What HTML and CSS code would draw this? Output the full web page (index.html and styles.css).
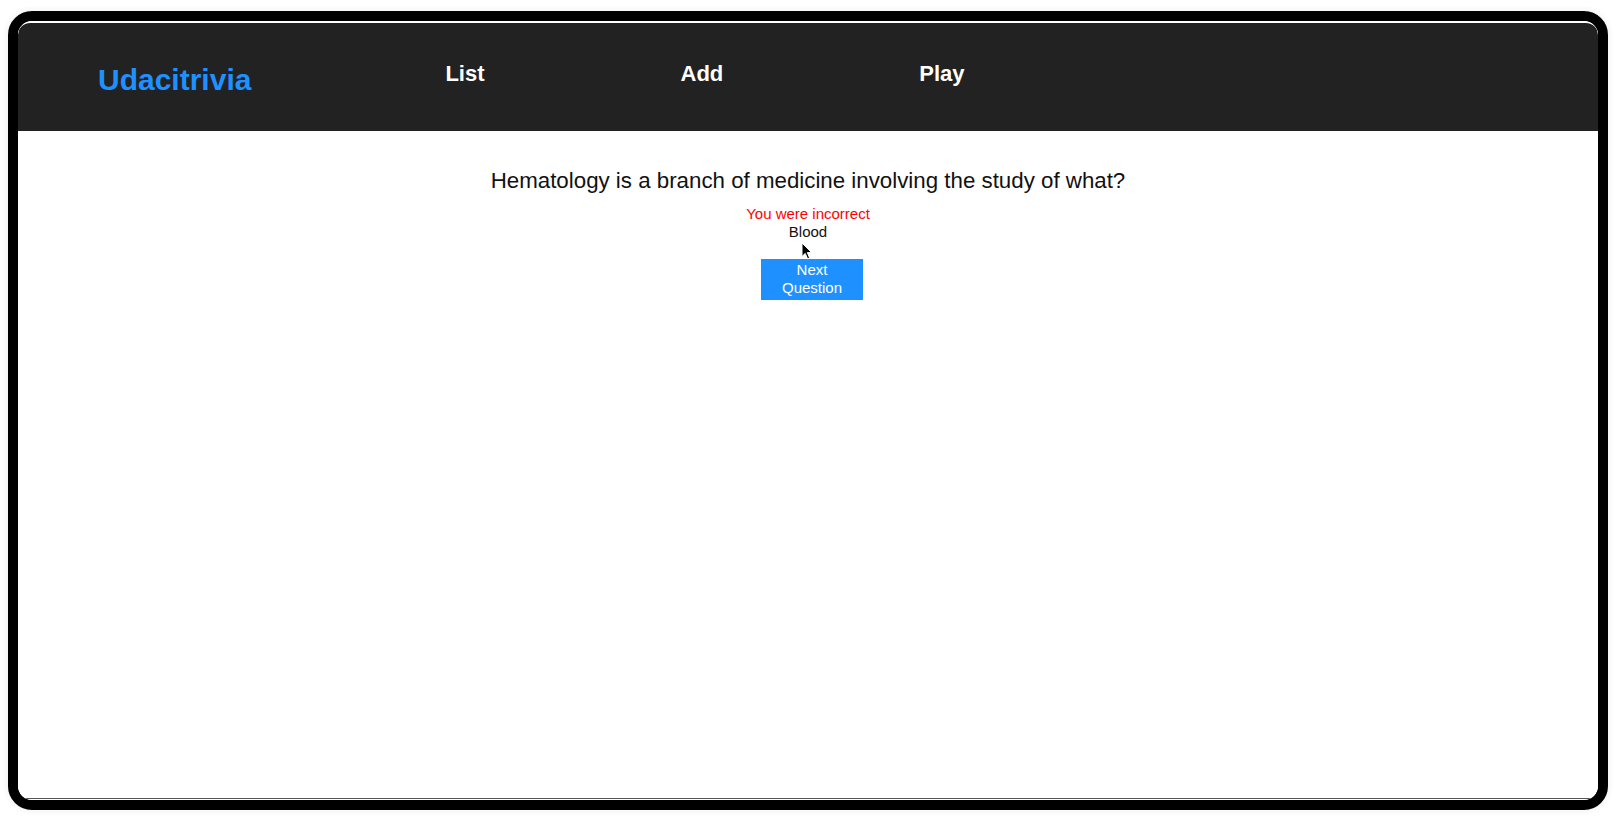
FILE: index.html
```html
<!DOCTYPE html>
<html>
<head>
<meta charset="utf-8">
<title>Udacitrivia</title>
<link rel="stylesheet" href="styles.css">
</head>
<body>
<div class="frame">
  <div class="screen">
    <header class="header">
      <div class="logo">Udacitrivia</div>
      <nav class="nav">
        <span class="nav-item">List</span>
        <span class="nav-item">Add</span>
        <span class="nav-item">Play</span>
      </nav>
    </header>
    <main class="play">
      <div class="question">Hematology is a branch of medicine involving the study of what?</div>
      <div class="result">You were incorrect</div>
      <div class="answer">Blood</div>
      <button class="next">Next Question</button>
      <svg class="cursor" width="12" height="18" viewBox="0 0 12 18">
        <path d="M1 1 L1 14.5 L4.2 11.4 L6.6 16.8 L8.6 15.9 L6.3 10.6 L10.6 10.6 Z" fill="#000" stroke="#fff" stroke-width="1" stroke-linejoin="round"/>
      </svg>
    </main>
  </div>
</div>
</body>
</html>
```

FILE: styles.css
```css
html, body {
  margin: 0;
  background: #ffffff;
}

body {
  padding: 11px 8px;
  box-sizing: border-box;
  height: 821px;
  overflow: hidden;
  font-family: "Liberation Sans", Arial, sans-serif;
}

.frame {
  width: 1600px;
  height: 799px;
  box-sizing: border-box;
  border: 10px solid #000;
  border-radius: 24px;
  box-shadow: 0 0 4px 3px rgba(0, 0, 0, 0.035);
  overflow: hidden;
  background: #fff;
}

.screen {
  height: 100%;
  display: flex;
  flex-direction: column;
  padding-top: 2px;
  box-sizing: border-box;
  border-radius: 14px;
  overflow: hidden;
  background: #fff;
}

.header {
  flex: none;
  height: 108px;
  background: #222222;
  display: flex;
  align-items: flex-start;
  padding-left: 80px;
  border-radius: 12px 12px 0 0;
}

.logo {
  color: #1e90ff;
  font-size: 30px;
  font-weight: bold;
  line-height: 1;
  margin-top: 42px;
}

.nav {
  display: flex;
  gap: 196px;
  margin-left: 194px;
  margin-top: 40px;
}

.nav-item {
  color: #ffffff;
  font-size: 22px;
  font-weight: bold;
  line-height: 1;
}

.play {
  flex: 1;
  position: relative;
  display: flex;
  flex-direction: column;
  align-items: center;
  border-bottom: 1px solid #555;
  margin-bottom: 1px;
  color: #111;
}

.question {
  font-size: 22.3px;
  line-height: 25px;
  margin-top: 37px;
}

.result {
  color: #ff0000;
  font-size: 15px;
  line-height: 18px;
  margin-top: 12px;
}

.answer {
  font-size: 15px;
  line-height: 17px;
}

.next {
  margin-top: 19px;
  margin-left: 8px;
  width: 102px;
  padding: 2px 6px 4px;
  border: none;
  background: #1e90ff;
  color: #ffffff;
  font-family: "Liberation Sans", Arial, sans-serif;
  font-size: 15px;
  line-height: 17.5px;
}

.cursor {
  position: absolute;
  left: 783px;
  top: 111px;
}
```
